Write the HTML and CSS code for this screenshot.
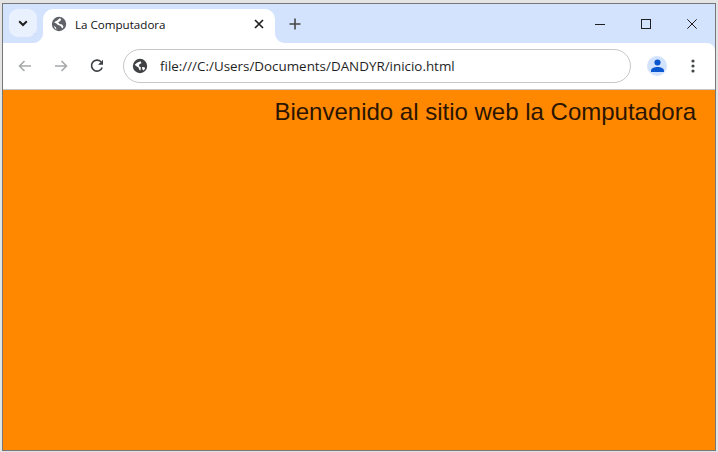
FILE: index.html
```html
<!DOCTYPE html>
<html lang="es">
<head>
<meta charset="utf-8">
<title>La Computadora</title>
<link rel="stylesheet" href="styles.css">
</head>
<body>
<div class="window">
  <div class="tabstrip">
    <div class="tabsearch">
      <svg width="12" height="12" viewBox="0 0 12 12"><path d="M2.2 4.2 6 8l3.8-3.8" fill="none" stroke="#1f1f1f" stroke-width="2"/></svg>
    </div>
    <div class="tab">
      <svg class="globe" width="16" height="16" viewBox="0 0 16 16"><circle cx="8" cy="8" r="7.200" fill="#5f6368"/><path d="M3 6.300 6.500 4.200 8.700 2.300l1.500.6-.8 2.200-2.300 1.200 1.500 1.600 2.600.6 1.300 2.300-1.200 1.700-1.700-2.400-3-1.300-1.300-1.300z" fill="#fff"/><path d="M2.600 9.800l2.200 1.400.8 2.200-1.400-.7z" fill="#fff"/></svg>
      <span class="tabtitle">La Computadora</span>
      <svg class="tabclose" width="10" height="10" viewBox="0 0 10 10"><path d="M1 1l8 8M9 1l-8 8" stroke="#1f1f1f" stroke-width="1.700"/></svg>
    </div>
    <svg class="newtab" width="12" height="12" viewBox="0 0 12 12"><path d="M6 .5v11M.5 6h11" stroke="#444746" stroke-width="1.600"/></svg>
    <div class="wincontrols">
      <svg width="10" height="10" viewBox="0 0 10 10"><path d="M0 5.500h10" stroke="#1f1f1f" stroke-width="1"/></svg>
      <svg width="10" height="10" viewBox="0 0 10 10"><rect x=".5" y=".5" width="9" height="9" fill="none" stroke="#1f1f1f"/></svg>
      <svg width="10" height="10" viewBox="0 0 10 10"><path d="M.3.300l9.400 9.400M9.700.300.3 9.700" stroke="#1f1f1f" stroke-width="1"/></svg>
    </div>
  </div>
  <div class="toolbar">
    <svg class="nav" width="16" height="16" viewBox="0 0 16 16"><path d="M14 8H2.500M7.500 3 2.500 8l5 5" fill="none" stroke="#a8a9aa" stroke-width="1.600"/></svg>
    <svg class="nav" width="16" height="16" viewBox="0 0 16 16"><path d="M2 8h11.500M8.500 3l5 5-5 5" fill="none" stroke="#a8a9aa" stroke-width="1.600"/></svg>
    <svg class="nav" width="16" height="16" viewBox="0 0 16 16"><path d="M13.200 9.500A5.500 5.500 0 1 1 12 3.800" fill="none" stroke="#3c4043" stroke-width="1.600"/><path d="M14 1.800v5H9z" fill="#3c4043"/></svg>
    <div class="omnibox">
      <svg width="16" height="16" viewBox="0 0 16 16"><circle cx="8" cy="8" r="7.200" fill="#3f4144"/><path d="M8.500 3.200 5 4.700 2.700 6.800l1.800 1.500 2 1.200.9 2.500 1 .6.500-3.200L6.800 7.900l.8-1.900 1.900-.8z" fill="#fff"/><path d="M10 9l2.500.3.600 1.200-1.400 2-1.300-1z" fill="#fff"/></svg>
      <span class="url">file:///C:/Users/Documents/DANDYR/inicio.html</span>
    </div>
    <div class="avatar">
      <svg width="13" height="13" viewBox="0 0 14 14"><circle cx="7" cy="3.800" r="3.300" fill="#0b57d0"/><path d="M0 14v-1.500C0 9.800 3.500 8.500 7 8.500s7 1.300 7 4V14z" fill="#0b57d0"/></svg>
    </div>
    <svg class="menu" width="4" height="14" viewBox="0 0 4 14"><circle cx="2" cy="2" r="1.600" fill="#444746"/><circle cx="2" cy="7" r="1.600" fill="#444746"/><circle cx="2" cy="12" r="1.600" fill="#444746"/></svg>
  </div>
  <main class="page">
    <p class="welcome">Bienvenido al sitio web la Computadora</p>
  </main>
</div>
</body>
</html>
```

FILE: styles.css
```css
* { box-sizing: border-box; }
html, body { margin: 0; height: 100%; }
body {
  background: #e4e4e4;
  padding: 3px 2px 1px 2px;
  overflow: hidden;
}
.window {
  height: 448px;
  border: 1px solid #777;
  display: flex;
  flex-direction: column;
  background: #d3e3fd;
  font-family: "Open Sans", "Noto Sans", sans-serif;
}
.tabstrip {
  height: 39px;
  flex: none;
  background: #d3e3fd;
  display: flex;
  align-items: flex-start;
  padding: 5px 0 0 6px;
}
.tabsearch {
  width: 28px;
  height: 28px;
  border-radius: 9px;
  background: #e9f0fe;
  display: flex;
  align-items: center;
  justify-content: center;
  margin-right: 6px;
}
.tab {
  position: relative;
  width: 232px;
  height: 34px;
  background: #fff;
  border-radius: 10px 10px 0 0;
  display: flex;
  align-items: center;
  padding: 0 11px 4px 8px;
}
.tab::before,
.tab::after {
  content: "";
  position: absolute;
  bottom: 0;
  width: 10px;
  height: 10px;
}
.tab::before {
  left: -10px;
  background: radial-gradient(circle at 0 0, #d3e3fd 9.500px, #fff 10.500px);
}
.tab::after {
  right: -10px;
  background: radial-gradient(circle at 100% 0, #d3e3fd 9.500px, #fff 10.500px);
}
.tabtitle {
  font-size: 11.600px;
  color: #111;
  margin-left: 8px;
  flex: 1;
}
.newtab { margin: 9px 0 0 14px; }
.wincontrols {
  margin: 10px 0 0 auto;
  display: flex;
  gap: 36px;
  padding-right: 18px;
}
.toolbar {
  height: 47px;
  flex: none;
  background: #fff;
  border-bottom: 1px solid #c7c7c7;
  border-top-right-radius: 8px;
  display: flex;
  align-items: center;
  padding: 0 18px 1px 14px;
}
.nav { margin-right: 20px; }
.nav:nth-child(3) { margin-right: 18px; }
.omnibox {
  width: 508px;
  height: 34px;
  border: 1px solid #c7c7c7;
  border-radius: 17px;
  display: flex;
  align-items: center;
  padding-left: 8px;
}
.url {
  font-size: 13.400px;
  color: #1f1f1f;
  margin-left: 12px;
}
.avatar {
  width: 20px;
  height: 20px;
  border-radius: 50%;
  background: #d3e3fd;
  display: flex;
  align-items: center;
  justify-content: center;
  margin-left: 16px;
}
.menu { margin-left: 24px; }
.page {
  flex: 1;
  background: #ff8800;
  padding: 8px 19px 0 0;
}
.welcome {
  margin: 0;
  text-align: right;
  font-family: "Liberation Sans", Arial, sans-serif;
  font-size: 24px;
  line-height: 28px;
  color: #2b1500;
}
```
